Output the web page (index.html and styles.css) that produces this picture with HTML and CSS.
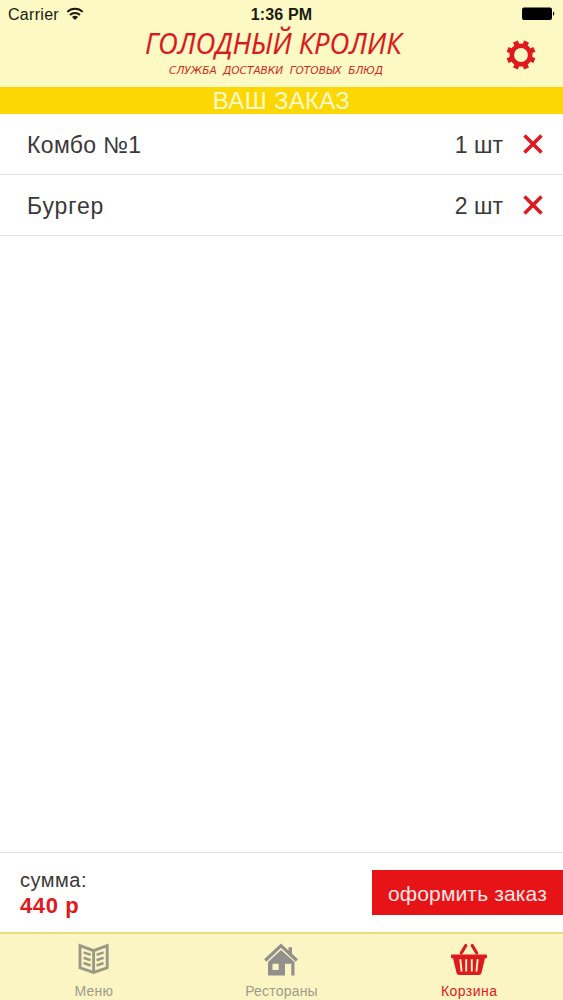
FILE: index.html
```html
<!DOCTYPE html>
<html lang="ru">
<head>
<meta charset="utf-8">
<meta name="viewport" content="width=device-width, initial-scale=1">
<title>Голодный кролик</title>
<link rel="stylesheet" href="styles.css">
</head>
<body>
<div class="app">
  <header class="header">
    <div class="status">
      <div class="carrier"><span>Carrier</span>
        <svg class="wifi" width="18" height="13" viewBox="0 0 18 13" fill="none" stroke="#1a1a10" stroke-width="2"><path d="M1.3 4.9a11 11 0 0 1 15.4 0M4 8a7.2 7.2 0 0 1 10 0"/><path d="M6 10.1a4.3 4.3 0 0 1 6 0L9 13z" fill="#1a1a10" stroke="none"/></svg>
      </div>
      <div class="time">1:36 PM</div>
      <svg class="battery" width="34" height="14" viewBox="0 0 34 14"><rect x="1" y=".5" width="30" height="12.5" rx="2" fill="#000"/><path d="M32 4.5q2.6 2.2 0 4.4z" fill="#000"/></svg>
    </div>
    <div class="brand">
      <svg class="logo" width="270" height="52" viewBox="0 0 270 52">
        <text class="logo-name" x="3" y="28" textLength="256.5" lengthAdjust="spacingAndGlyphs">ГОЛОДНЫЙ КРОЛИК</text>
        <text class="logo-tag" x="27" y="48" textLength="214" lengthAdjust="spacingAndGlyphs">СЛУЖБА ДОСТАВКИ ГОТОВЫХ БЛЮД</text>
      </svg>
      <svg class="gear" width="30" height="30" viewBox="-15 -15 30 30">
        <circle r="9.2" fill="none" stroke="#df1a1e" stroke-width="4.6"/>
        <g stroke="#df1a1e" stroke-width="5.2"><path d="M0-14.5V-9M0 14.5V9M-14.5 0H-9M14.5 0H9" transform="rotate(22.5)"/><path d="M0-14.5V-9M0 14.5V9M-14.5 0H-9M14.5 0H9" transform="rotate(67.5)"/></g>
      </svg>
    </div>
  </header>
  <h1 class="title">ВАШ ЗАКАЗ</h1>
  <main class="list">
    <div class="row"><span class="name combo">Комбо №1</span><span class="qty">1 шт</span>
      <svg class="remove" width="20" height="20" viewBox="0 0 20 20"><path d="M1.5 1.5l17 17M18.5 1.5l-17 17"/></svg></div>
    <div class="row"><span class="name burger">Бургер</span><span class="qty">2 шт</span>
      <svg class="remove" width="20" height="20" viewBox="0 0 20 20"><path d="M1.5 1.5l17 17M18.5 1.5l-17 17"/></svg></div>
  </main>
  <section class="checkout">
    <div class="total"><div class="label">сумма:</div><div class="sum">440 р</div></div>
    <button class="order">оформить заказ</button>
  </section>
  <nav class="tabs">
    <div class="tab">
      <svg width="32" height="32" viewBox="0 0 32 32" fill="none" stroke="#9c9886" stroke-width="2.9"><path d="M2 3.7L15.6 8.7 29.2 3.7V25.8L15.6 30.4 2 25.8zM15.6 8.7V30.4"/><path d="M5.6 10.4l7 2.5M5.6 15.7l7 2.5M5.6 21l7 2.5M25.6 10.4l-7 2.5M25.6 15.7l-7 2.5M25.6 21l-7 2.5" stroke-width="2.5"/></svg>
      <span class="menu">Меню</span>
    </div>
    <div class="tab">
      <svg width="36" height="34" viewBox="0 0 36 34"><path d="M2.2 18.5L18 3.6 33.8 18.5" fill="none" stroke="#92908c" stroke-width="3.2"/><path d="M25.5 5.3H29V13L25.5 9.7z" fill="#92908c"/><path fill="#92908c" fill-rule="evenodd" d="M18 8L31.5 20V33.5H28.3V21.8H22V33.5H5V20zM9.5 21.8V28H15.7V21.8z"/></svg>
      <span class="rest">Рестораны</span>
    </div>
    <div class="tab active">
      <svg width="38" height="34" viewBox="0 0 38 34"><path d="M15.8 3.5L11.3 11M22.2 3.5L26.7 11" fill="none" stroke="#df1a1e" stroke-width="3.2" stroke-linecap="round"/><path d="M2 12.5h34q1 0 1 1v1.8q0 1-1 1H35L31.5 30.7Q31 33 28.8 33H9.2Q7 33 6.5 30.7L3 16.3H2q-1 0-1-1v-1.8q0-1 1-1z" fill="#df1a1e"/><path d="M10.3 17.2L11.6 29.6M16.2 17.2V29.6M21.8 17.2V29.6M27.7 17.2L26.4 29.6" stroke="#fbf5c4" stroke-width="1.9"/></svg>
      <span class="basket">Корзина</span>
    </div>
  </nav>
</div>
</body>
</html>
```
FILE: styles.css
```css
* { box-sizing: border-box; }
body { margin: 0; font-family: "Liberation Sans", Arial, sans-serif; color: #3a3739; background: #fff; }
svg { display: block; flex: none; }
.app { width: 563px; height: 1000px; display: flex; flex-direction: column; overflow: hidden; }
.header { height: 87px; background: #fcf9c4; flex: none; }
.status { height: 26px; padding: 3px 8px 0; display: grid; grid-template-columns: 1fr auto 1fr; align-items: center; color: #1a1a10; }
.carrier { display: flex; align-items: center; gap: 7px; font-size: 16px; letter-spacing: .3px; }
.wifi { margin-top: -3px; }
.time { font-size: 16px; font-weight: 700; letter-spacing: .15px; }
.battery { justify-self: end; margin-top: -1px; }
.brand { display: flex; justify-content: space-between; padding: 0 27px 0 142px; }
.gear { margin-top: 14px; }
.logo { overflow: visible; }
.logo-name { font: italic 30px "Open Sans", sans-serif; fill: #d9191d; stroke: #d9191d; stroke-width: .2px; }
.logo-tag { font: italic 10.5px "DejaVu Sans", sans-serif; fill: #cf2a22; word-spacing: 3px; }
.title { margin: 0; height: 27px; flex: none; background: #fcd703; color: #fdf9cc; font-size: 24px; line-height: 28px; font-weight: 400; text-align: center; letter-spacing: .3px; }
.list { flex: 1; }
.row { height: 61px; display: flex; align-items: center; padding: 0 20px 0 27px; border-bottom: 1px solid #e2e2e4; font-size: 23px; }
.name { flex: 1; padding-top: 2px; }
.combo { letter-spacing: .35px; }
.burger { letter-spacing: .85px; }
.qty { margin-right: 20px; padding-top: 2px; }
.remove { stroke: #df1a1e; stroke-width: 3.6; }
.checkout { height: 80px; flex: none; border-top: 1px solid #e2dfe2; display: flex; justify-content: space-between; padding: 0 0 0 20px; }
.total { padding-top: 14px; }
.label { font-size: 20px; line-height: 26px; letter-spacing: .5px; }
.sum { font-size: 22px; line-height: 25px; font-weight: 700; color: #df1a1e; letter-spacing: .6px; }
.order { margin-top: 17px; width: 191px; height: 45px; border: 0; padding: 2px 0 0; background: #e61317; color: #fde6e4; font: 21px "Liberation Sans", Arial, sans-serif; letter-spacing: .15px; }
.tabs { height: 68px; flex: none; border-top: 2px solid #eadc78; background: #faf5c3; display: grid; grid-template-columns: repeat(3, 1fr); }
.tab { display: flex; flex-direction: column; align-items: center; justify-content: space-between; padding: 8px 0 1px; color: #9f9b8c; font-size: 14px; line-height: 16px; }
.menu, .rest { letter-spacing: .2px; }
.basket { letter-spacing: .45px; }
.active { color: #df1a1e; }
```
